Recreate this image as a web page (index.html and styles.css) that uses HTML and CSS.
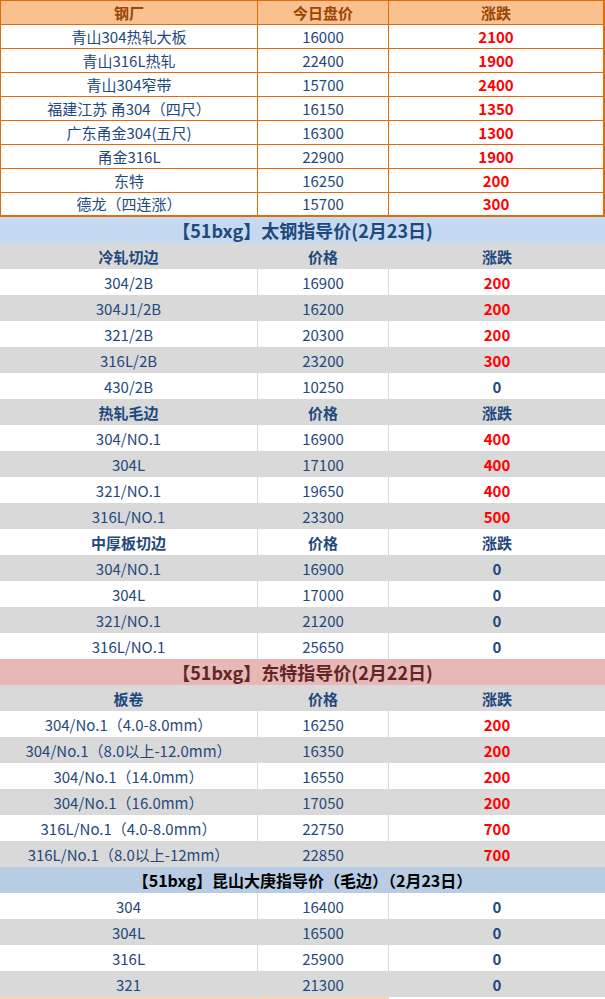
FILE: index.html
```html
<!DOCTYPE html>
<html lang="zh-CN">
<head>
<meta charset="utf-8">
<title>不锈钢价格</title>
<link rel="stylesheet" href="styles.css">
</head>
<body>
<div class="sheet">
  <section class="mills">
    <div class="row head"><div class="c">钢厂</div><div class="c">今日盘价</div><div class="c">涨跌</div></div>
    <div class="row"><div class="c">青山304热轧大板</div><div class="c">16000</div><div class="c up">2100</div></div>
    <div class="row"><div class="c">青山316L热轧</div><div class="c">22400</div><div class="c up">1900</div></div>
    <div class="row"><div class="c">青山304窄带</div><div class="c">15700</div><div class="c up">2400</div></div>
    <div class="row"><div class="c">福建江苏 甬304（四尺）</div><div class="c">16150</div><div class="c up">1350</div></div>
    <div class="row"><div class="c">广东甬金304(五尺)</div><div class="c">16300</div><div class="c up">1300</div></div>
    <div class="row"><div class="c">甬金316L</div><div class="c">22900</div><div class="c up">1900</div></div>
    <div class="row"><div class="c">东特</div><div class="c">16250</div><div class="c up">200</div></div>
    <div class="row"><div class="c">德龙（四连涨）</div><div class="c">15700</div><div class="c up">300</div></div>
  </section>

  <section class="guide">
    <div class="title blue">【51bxg】太钢指导价(2月23日)</div>
    <div class="row g sub"><div class="c">冷轧切边</div><div class="c">价格</div><div class="c">涨跌</div></div>
    <div class="row"><div class="c">304/2B</div><div class="c">16900</div><div class="c up">200</div></div>
    <div class="row g"><div class="c">304J1/2B</div><div class="c">16200</div><div class="c up">200</div></div>
    <div class="row"><div class="c">321/2B</div><div class="c">20300</div><div class="c up">200</div></div>
    <div class="row g"><div class="c">316L/2B</div><div class="c">23200</div><div class="c up">300</div></div>
    <div class="row"><div class="c">430/2B</div><div class="c">10250</div><div class="c zero">0</div></div>
    <div class="row g sub"><div class="c">热轧毛边</div><div class="c">价格</div><div class="c">涨跌</div></div>
    <div class="row"><div class="c">304/NO.1</div><div class="c">16900</div><div class="c up">400</div></div>
    <div class="row g"><div class="c">304L</div><div class="c">17100</div><div class="c up">400</div></div>
    <div class="row"><div class="c">321/NO.1</div><div class="c">19650</div><div class="c up">400</div></div>
    <div class="row g"><div class="c">316L/NO.1</div><div class="c">23300</div><div class="c up">500</div></div>
    <div class="row sub"><div class="c">中厚板切边</div><div class="c">价格</div><div class="c">涨跌</div></div>
    <div class="row g"><div class="c">304/NO.1</div><div class="c">16900</div><div class="c zero">0</div></div>
    <div class="row"><div class="c">304L</div><div class="c">17000</div><div class="c zero">0</div></div>
    <div class="row g"><div class="c">321/NO.1</div><div class="c">21200</div><div class="c zero">0</div></div>
    <div class="row"><div class="c">316L/NO.1</div><div class="c">25650</div><div class="c zero">0</div></div>

    <div class="title pink">【51bxg】东特指导价(2月22日)</div>
    <div class="row g sub"><div class="c">板卷</div><div class="c">价格</div><div class="c">涨跌</div></div>
    <div class="row"><div class="c">304/No.1（4.0-8.0mm）</div><div class="c">16250</div><div class="c up">200</div></div>
    <div class="row g"><div class="c">304/No.1（8.0以上-12.0mm）</div><div class="c">16350</div><div class="c up">200</div></div>
    <div class="row"><div class="c">304/No.1（14.0mm）</div><div class="c">16550</div><div class="c up">200</div></div>
    <div class="row g"><div class="c">304/No.1（16.0mm）</div><div class="c">17050</div><div class="c up">200</div></div>
    <div class="row"><div class="c">316L/No.1（4.0-8.0mm）</div><div class="c">22750</div><div class="c up">700</div></div>
    <div class="row g"><div class="c">316L/No.1（8.0以上-12mm）</div><div class="c">22850</div><div class="c up">700</div></div>

    <div class="title steel">【51bxg】昆山大庚指导价（毛边）（2月23日）</div>
    <div class="row"><div class="c">304</div><div class="c">16400</div><div class="c zero">0</div></div>
    <div class="row g"><div class="c">304L</div><div class="c">16500</div><div class="c zero">0</div></div>
    <div class="row"><div class="c">316L</div><div class="c">25900</div><div class="c zero">0</div></div>
    <div class="row g"><div class="c">321</div><div class="c">21300</div><div class="c zero">0</div></div>
    <div class="tail"><div class="c"></div><div class="c"></div><div class="c"></div></div>
  </section>
</div>
</body>
</html>
```

FILE: styles.css
```css
* { box-sizing: border-box; }
html, body { margin: 0; padding: 0; background: #ffffff; }
body {
  font-family: "Noto Sans CJK SC", "Noto Sans", sans-serif;
  font-size: 15px;
  color: #1f497d;
}
.sheet { width: 605px; }

.row {
  display: grid;
  grid-template-columns: 257px 131px 1fr;
}
.c {
  text-align: center;
  white-space: nowrap;
  overflow: hidden;
}

/* top mills table */
.mills {
  border: 1px solid #e26b0a;
  border-right-width: 2px;
  border-bottom-width: 2px;
}
.mills .row {
  grid-template-columns: 256px 131px 1fr;
  height: 24px;
  border-bottom: 1px solid #e26b0a;
}
.mills .row:last-child { height: 22px; border-bottom: 0; }
.mills .c { line-height: 23px; }
.mills .row:last-child .c { line-height: 22px; }
.mills .c + .c { border-left: 1px solid #e26b0a; }
.mills .head { background: #fac090; }
.mills .head .c { color: #974706; font-weight: bold; }

/* guide tables */
.guide .row { height: 26px; }
.guide .c { line-height: 25px; padding-top: 1px; }
.guide .c + .c { border-left: 1px solid #d9d9d9; }
.guide .g { background: #d9d9d9; }
.guide .sub .c { font-weight: bold; }

.title {
  height: 26px;
  line-height: 25px;
  padding-top: 1px;
  text-align: center;
  font-weight: bold;
  white-space: nowrap;
}
.title.blue { background: #c5d9f1; color: #1f497d; font-size: 18px; }
.title.pink { background: #e6b8b7; color: #632523; font-size: 18px; }
.title.steel { background: #b8cce4; color: #000000; font-size: 16px; }

.up { color: #ff0000; font-weight: bold; }
.zero { color: #1f497d; font-weight: bold; }

.tail { display: grid; grid-template-columns: 257px 131px 1fr; height: 2px; }
.tail .c:nth-child(-n+2) { background: #fcd5b4; }
```
